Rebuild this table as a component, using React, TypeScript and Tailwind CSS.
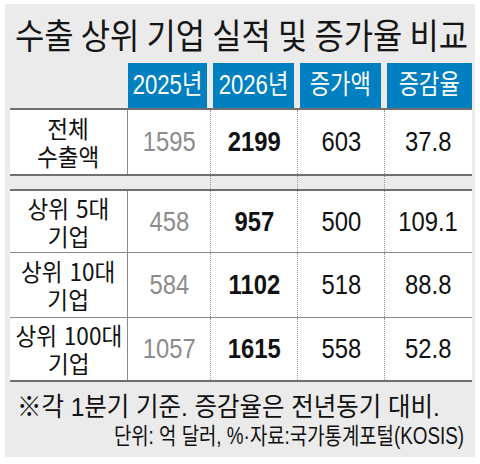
import React from "react";

const FONT = { fontFamily: '"Liberation Sans", "Noto Sans CJK KR", sans-serif' };
const KFONT = { fontFamily: '"Noto Sans CJK KR", "Liberation Sans", sans-serif' };

type Row = { label: string[]; a: string; b: string; c: string; d: string; h: string; top: string };

const rows: Row[] = [
  { label: ["상위 5대", "기업"], a: "458", b: "957", c: "500", d: "109.1", h: "h-[63px]", top: "border-t-2 border-[#6f6f6f]" },
  { label: ["상위 10대", "기업"], a: "584", b: "1102", c: "518", d: "88.8", h: "h-[65px]", top: "border-t border-[#8a8a8a]" },
  { label: ["상위 100대", "기업"], a: "1057", b: "1615", c: "558", d: "52.8", h: "h-[65px]", top: "border-t border-[#8a8a8a]" },
];

function Num({ v, cls }: { v: string; cls: string }) {
  return (
    <div className={"flex items-center justify-center " + cls}>
      <span className="inline-block scale-x-[0.85] text-[28px] leading-none whitespace-nowrap">{v}</span>
    </div>
  );
}

function Label({ lines }: { lines: string[] }) {
  return (
    <div className="flex items-center justify-center border-r border-[#8a8a8a]">
      <span
        className="inline-block scale-x-[0.94] text-[24px] leading-[28px] whitespace-nowrap text-center [word-spacing:2px]"
        style={KFONT}
      >
        {lines[0]}
        <br />
        {lines[1]}
      </span>
    </div>
  );
}

function DataRow({ label, a, b, c, d, h, extra }: { label: string[]; a: string; b: string; c: string; d: string; h: string; extra: string }) {
  return (
    <div className={"grid grid-cols-[118px_82px_87px_87px_88px] bg-white " + h + " " + extra}>
      <Label lines={label} />
      <Num v={a} cls="text-[#8c8c8c]" />
      <Num v={b} cls="font-bold text-[#111] border-l border-dotted border-[#9a9a9a]" />
      <Num v={c} cls="text-[#111] border-l border-dotted border-[#9a9a9a]" />
      <Num v={d} cls="text-[#111] border-l border-dotted border-[#9a9a9a]" />
    </div>
  );
}

function Head({ t, cls }: { t: string; cls: string }) {
  return (
    <div className={"bg-[#0080c0] flex items-center justify-center text-white " + cls}>
      <span className="inline-block scale-x-[0.82] text-[27px] leading-none whitespace-nowrap">{t}</span>
    </div>
  );
}

export default function App() {
  return (
    <div className="w-[480px] h-[464px] bg-white pt-[4px] pl-[5px]" style={FONT}>
      <div className="w-[470px] h-[453px] bg-[#ebebeb] pl-[5px] pr-[3px] text-[#111]">
        <div className="h-[59px] flex items-center pl-[5px]">
          <span className="inline-block origin-left scale-x-[0.91] text-[35px] leading-none whitespace-nowrap text-[#151515]" style={KFONT}>
            수출 상위 기업 실적 및 증가율 비교
          </span>
        </div>
        <div className="grid grid-cols-[118px_82px_87px_87px_88px] h-[45px]">
          <div />
          <Head t="2025년" cls="mr-[3px]" />
          <Head t="2026년" cls="mx-[3px]" />
          <Head t="증가액" cls="mx-[3px]" />
          <Head t="증감율" cls="ml-[3px]" />
        </div>
        <DataRow
          label={["전체", "수출액"]}
          a="1595"
          b="2199"
          c="603"
          d="37.8"
          h="h-[68px]"
          extra="border-y-2 border-[#6f6f6f]"
        />
        <div className="grid grid-cols-[118px_82px_87px_87px_88px] h-[13px]">
          <div />
          <div />
          <div className="border-l border-dotted border-[#9a9a9a]" />
          <div className="border-l border-dotted border-[#9a9a9a]" />
          <div className="border-l border-dotted border-[#9a9a9a]" />
        </div>
        {rows.map((r, i) => (
          <DataRow
            key={r.a}
            label={r.label}
            a={r.a}
            b={r.b}
            c={r.c}
            d={r.d}
            h={r.h}
            extra={r.top + (i === rows.length - 1 ? " border-b-2 border-b-[#6f6f6f]" : "")}
          />
        ))}
        <div className="pl-[7px] pt-[13px] h-[37px] flex items-center">
          <span className="inline-block origin-left scale-x-[0.94] text-[26px] leading-none whitespace-nowrap">
            ※각 1분기 기준. 증감율은 전년동기 대비.
          </span>
        </div>
        <div className="flex justify-end pr-[8px] h-[34px] items-center">
          <span className="inline-block origin-right scale-x-[0.82] text-[23px] leading-none whitespace-nowrap">
            단위: 억 달러, %·자료:국가통계포털(KOSIS)
          </span>
        </div>
      </div>
    </div>
  );
}
